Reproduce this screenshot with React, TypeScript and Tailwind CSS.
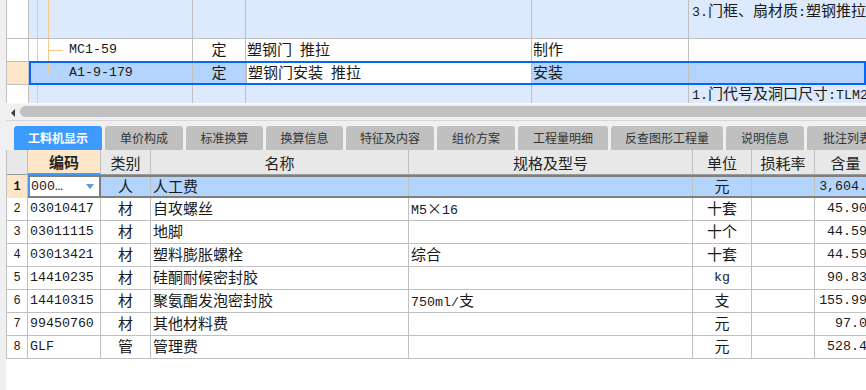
import React from "react";

const CJK = /([\u2E80-\u9FFF\u3000-\u303F\uFF00-\uFFEF×]+)/;

// latin runs in mono 13.3px, CJK runs slightly larger like the original song font
const Mix = ({ text }: { text: string }) => (
  <span className="whitespace-pre">
    {text.split(CJK).map((part, i) =>
      i % 2 ? (
        <span key={i} className="font-['Noto_Sans_CJK_SC'] text-[15px]">
          {part}
        </span>
      ) : (
        part
      )
    )}
  </span>
);

const cell =
  "shrink-0 flex items-center border-r border-[#c0c0c0] leading-none whitespace-nowrap overflow-hidden";
const mono = "font-['Liberation_Mono','Noto_Sans_CJK_SC',monospace] text-[13.3px] text-[#1a1a1a]";

const TreeLines = ({ inner, branch }: { inner: "full" | "half" | "none"; branch: boolean }) => (
  <>
    <span className="absolute left-[8px] top-0 bottom-0 w-px bg-[#f7c98e]" />
    {inner === "full" && <span className="absolute left-[19px] top-0 bottom-0 w-px bg-[#f7c98e]" />}
    {inner === "half" && <span className="absolute left-[19px] top-0 h-1/2 w-px bg-[#f7c98e]" />}
    {branch && <span className="absolute left-[19px] top-1/2 w-[15px] h-px bg-[#f7c98e]" />}
  </>
);

const tabs: [string, string][] = [
  ["工料机显示", "w-[88px]"],
  ["单价构成", "w-[78px]"],
  ["标准换算", "w-[77px]"],
  ["换算信息", "w-[77px]"],
  ["特征及内容", "w-[88px]"],
  ["组价方案", "w-[78px]"],
  ["工程量明细", "w-[90px]"],
  ["反查图形工程量", "w-[112px]"],
  ["说明信息", "w-[78px]"],
  ["批注列表", "w-[80px]"],
];

const rows = [
  { code: "03010417", type: "材", name: "自攻螺丝", spec: "M5×16", unit: "十套", qty: "45.900" },
  { code: "03011115", type: "材", name: "地脚", spec: "", unit: "十个", qty: "44.590" },
  { code: "03013421", type: "材", name: "塑料膨胀螺栓", spec: "综合", unit: "十套", qty: "44.590" },
  { code: "14410235", type: "材", name: "硅酮耐候密封胶", spec: "", unit: "kg", qty: "90.830" },
  { code: "14410315", type: "材", name: "聚氨酯发泡密封胶", spec: "750ml/支", unit: "支", qty: "155.990" },
  { code: "99450760", type: "材", name: "其他材料费", spec: "", unit: "元", qty: "97.00" },
  { code: "GLF", type: "管", name: "管理费", spec: "", unit: "元", qty: "528.40" },
];

const W = {
  num: "w-[22px]",
  code: "w-[73px]",
  type: "w-[50px]",
  name: "w-[258px]",
  spec: "w-[284px]",
  unit: "w-[59px]",
  loss: "w-[63px]",
  qty: "w-[62px]",
};

export default function App() {
  return (
    <div className="w-[866px] h-[390px] overflow-hidden bg-white flex">
      <div className="w-[6px] shrink-0 bg-[#f0f0f0]" />
      <div className="w-[860px] shrink-0 flex flex-col">
        {/* upper list */}
        <div className={`flex flex-col ${mono}`}>
          <div className="flex h-[39px] border-b border-[#c0c0c0]">
            <div className={`${cell} w-[23px] border-l bg-white`} />
            <div className={`${cell} w-[164px] bg-[#dde9fc] relative`}>
              <TreeLines inner="full" branch={false} />
            </div>
            <div className={`${cell} w-[53px] bg-[#dde9fc]`} />
            <div className={`${cell} w-[286px] bg-[#dde9fc]`} />
            <div className={`${cell} w-[157px] bg-[#dde9fc]`} />
            <div className={`${cell} flex-1 bg-[#dde9fc] border-r-0 items-start pl-[3px] pt-[2px]`}>
              <Mix text="3.门框、扇材质:塑钢推拉" />
            </div>
          </div>
          <div className="flex h-[23px] border-b border-[#c0c0c0] bg-white">
            <div className={`${cell} w-[23px] border-l`} />
            <div className={`${cell} w-[164px] relative pl-[40px]`}>
              <TreeLines inner="full" branch />
              MC1-59
            </div>
            <div className={`${cell} w-[53px] justify-center`}>
              <Mix text="定" />
            </div>
            <div className={`${cell} w-[286px] pl-[1px]`}>
              <Mix text="塑钢门 推拉" />
            </div>
            <div className={`${cell} w-[157px] pl-[1px]`}>
              <Mix text="制作" />
            </div>
            <div className={`${cell} flex-1 border-r-0`} />
          </div>
          <div className="flex h-[23px] border-b border-[#c0c0c0] relative">
            <div className={`${cell} w-[23px] border-l bg-[#fee6c9]`} />
            <div className={`${cell} w-[164px] relative pl-[40px] bg-[#b3d5fd]`}>
              <TreeLines inner="half" branch />
              A1-9-179
            </div>
            <div className={`${cell} w-[53px] justify-center bg-[#b3d5fd]`}>
              <Mix text="定" />
            </div>
            <div className={`${cell} w-[287px] -ml-px bg-white border-x-2 border-[#0a64f5] pl-[1px]`}>
              <Mix text="塑钢门安装 推拉" />
            </div>
            <div className={`${cell} w-[157px] pl-[1px] bg-[#b3d5fd]`}>
              <Mix text="安装" />
            </div>
            <div className={`${cell} flex-1 border-r-0 bg-[#b3d5fd]`} />
            <div className="absolute left-[23px] right-0 -top-px -bottom-px border-2 border-[#0a64f5] pointer-events-none" />
          </div>
          <div className="flex h-[18px]">
            <div className={`${cell} w-[23px] border-l bg-white`} />
            <div className={`${cell} w-[164px] bg-[#dde9fc] relative`}>
              <TreeLines inner="none" branch={false} />
            </div>
            <div className={`${cell} w-[53px] bg-[#dde9fc]`} />
            <div className={`${cell} w-[286px] bg-[#dde9fc]`} />
            <div className={`${cell} w-[157px] bg-[#dde9fc]`} />
            <div className={`${cell} flex-1 bg-[#dde9fc] border-r-0 items-end pl-[3px] pb-[1px]`}>
              <Mix text="1.门代号及洞口尺寸:TLM2" />
            </div>
          </div>
        </div>

        {/* horizontal scrollbar */}
        <div className="h-[17px] bg-[#f0f0f0] border-t border-[#fafafa] flex items-start pt-[2px]">
          <div className="ml-[5px] mt-[3px] w-0 h-0 border-y-[4px] border-y-transparent border-r-[4px] border-r-[#3c3c3c]" />
          <div className="ml-[5px] flex-1 h-[11px] rounded-l-[6px] bg-[#c1c1c1]" />
        </div>

        {/* tabs */}
        <div className="h-[30px] bg-[#f0f0f0] border-t border-[#d6d6d6] flex items-end pl-[8px] gap-[3px] font-['Noto_Sans_CJK_SC',sans-serif] text-[12px]">
          {tabs.map(([label, w], i) => (
            <div
              key={label}
              className={`${w} shrink-0 h-[24px] rounded-t-[3px] flex items-center justify-center whitespace-nowrap ${
                i === 0 ? "bg-[#3d9bff] text-white font-bold" : "bg-[#c0c0c0] text-[#333]"
              }`}
            >
              {label}
            </div>
          ))}
        </div>

        {/* resource grid header */}
        <div className="flex h-[25px] bg-[#e8e8e8] font-['Noto_Sans_CJK_SC',sans-serif] text-[15px] text-[#222] leading-none">
          <div className={`${cell} ${W.num} border-l border-b border-b-[#9a9a9a]`} />
          <div className={`${cell} ${W.code} justify-center bg-[#fee6c9] font-bold border-b-2 border-b-[#3d9bff]`}>编码</div>
          <div className={`${cell} ${W.type} justify-center border-b border-b-[#9a9a9a]`}>类别</div>
          <div className={`${cell} ${W.name} justify-center border-b border-b-[#9a9a9a]`}>名称</div>
          <div className={`${cell} ${W.spec} justify-center border-b border-b-[#9a9a9a]`}>规格及型号</div>
          <div className={`${cell} ${W.unit} justify-center border-b border-b-[#9a9a9a]`}>单位</div>
          <div className={`${cell} ${W.loss} justify-center border-b border-b-[#9a9a9a]`}>损耗率</div>
          <div className={`${cell} ${W.qty} justify-center border-b border-b-[#9a9a9a]`}>含量</div>
        </div>

        {/* resource rows */}
        <div className={`flex flex-col ${mono}`}>
          <div className="flex h-[23px]">
            <div className={`${cell} ${W.num} border-l justify-center bg-[#fee6c9] font-bold text-[12px]`}>1</div>
            <div className="flex border-y-2 border-[#7f7f7f] bg-[#b3d5fd]">
              <div className={`${cell} ${W.code} bg-white border-l-2 border-l-[#3d9bff] border-r-2 border-r-[#7f7f7f] justify-between pl-[1px]`}>
                <span>000…</span>
                <span className="mr-[5px] w-0 h-0 border-x-[4px] border-x-transparent border-t-[5px] border-t-[#5a9bd8]" />
              </div>
              <div className={`${cell} ${W.type} justify-center`}>
                <Mix text="人" />
              </div>
              <div className={`${cell} ${W.name} pl-[2px]`}>
                <Mix text="人工费" />
              </div>
              <div className={`${cell} ${W.spec}`} />
              <div className={`${cell} ${W.unit} justify-center`}>
                <Mix text="元" />
              </div>
              <div className={`${cell} ${W.loss}`} />
              <div className={`${cell} ${W.qty} justify-end pr-[1px]`}>3,604.4</div>
            </div>
          </div>
          {rows.map((r, i) => (
            <div key={r.code} className="flex h-[23px] border-b border-[#c0c0c0]">
              <div className={`${cell} ${W.num} border-l justify-center text-[12px]`}>{i + 2}</div>
              <div className={`${cell} ${W.code} pl-[2px]`}>{r.code}</div>
              <div className={`${cell} ${W.type} justify-center`}>
                <Mix text={r.type} />
              </div>
              <div className={`${cell} ${W.name} pl-[2px]`}>
                <Mix text={r.name} />
              </div>
              <div className={`${cell} ${W.spec} pl-[2px]`}>
                <Mix text={r.spec} />
              </div>
              <div className={`${cell} ${W.unit} justify-center`}>
                <Mix text={r.unit} />
              </div>
              <div className={`${cell} ${W.loss}`} />
              <div className={`${cell} ${W.qty} justify-end pr-[1px]`}>{r.qty}</div>
            </div>
          ))}
        </div>
      </div>
    </div>
  );
}
